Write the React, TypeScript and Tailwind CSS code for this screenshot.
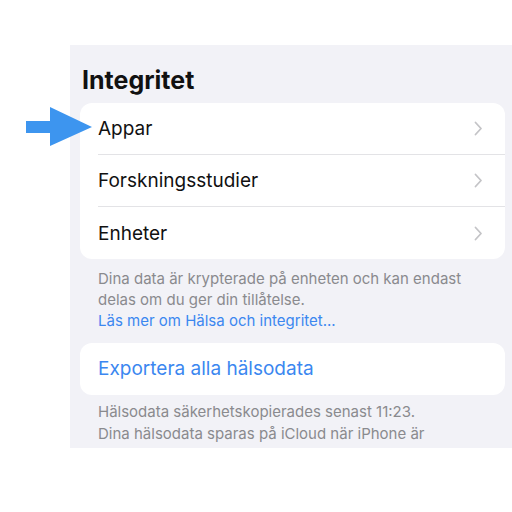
import React from "react";

const Chevron = () => (
  <svg width="9" height="15" viewBox="0 0 9 15" fill="none">
    <path d="M1.5 1.5L7 7.5L1.5 13.5" stroke="#c4c4c7" strokeWidth="1.8" strokeLinecap="round" strokeLinejoin="round" />
  </svg>
);

const Row = ({ label, last }: { label: string; last?: boolean }) => (
  <div className="flex h-[52px] items-stretch pl-[18px]">
    <div className={`flex flex-1 items-center justify-between pr-[22px] ${last ? "" : "border-b border-[#e3e3e6]"}`}>
      <span className="text-[19px] text-[#111] pt-[2px]">{label}</span>
      <Chevron />
    </div>
  </div>
);

export default function App() {
  return (
    <div className="relative w-[512px] h-[512px] bg-white overflow-hidden" style={{ fontFamily: "Inter, 'Noto Sans', sans-serif" }}>
      <div className="ml-[70px] mt-[45px] w-[442px] h-[403px] bg-[#f2f2f7] overflow-hidden pl-[10px] pr-[7px]">
        <div className="pl-[2px] pt-[20px] h-[58px] text-[25px] leading-[30px] font-bold text-[#111]">Integritet</div>
        <div className="bg-white rounded-[12px]">
          <Row label="Appar" />
          <Row label="Forskningsstudier" />
          <Row label="Enheter" last />
        </div>
        <div className="pl-[18px] pt-[9px] text-[15px] leading-[21px] text-[#8a8a8e]">
          <div>Dina data är krypterade på enheten och kan endast</div>
          <div>delas om du ger din tillåtelse.</div>
          <div className="text-[#3b87f0]">Läs mer om Hälsa och integritet...</div>
        </div>
        <div className="mt-[12px] bg-white rounded-[12px] h-[52px] flex items-center pl-[18px]">
          <span className="text-[19px] text-[#3b87f0] pt-[1px]">Exportera alla hälsodata</span>
        </div>
        <div className="pl-[18px] pt-[6px] text-[15px] leading-[22px] text-[#8a8a8e]">
          <div>Hälsodata säkerhetskopierades senast 11:23.</div>
          <div>Dina hälsodata sparas på iCloud när iPhone är</div>
        </div>
      </div>
      <svg className="absolute left-[26px] top-[107px]" width="66" height="39" viewBox="0 0 66 39">
        <polygon points="0,14 24,14 24,0 66,20 24,39 24,26 0,26" fill="#3d95ef" />
      </svg>
    </div>
  );
}
